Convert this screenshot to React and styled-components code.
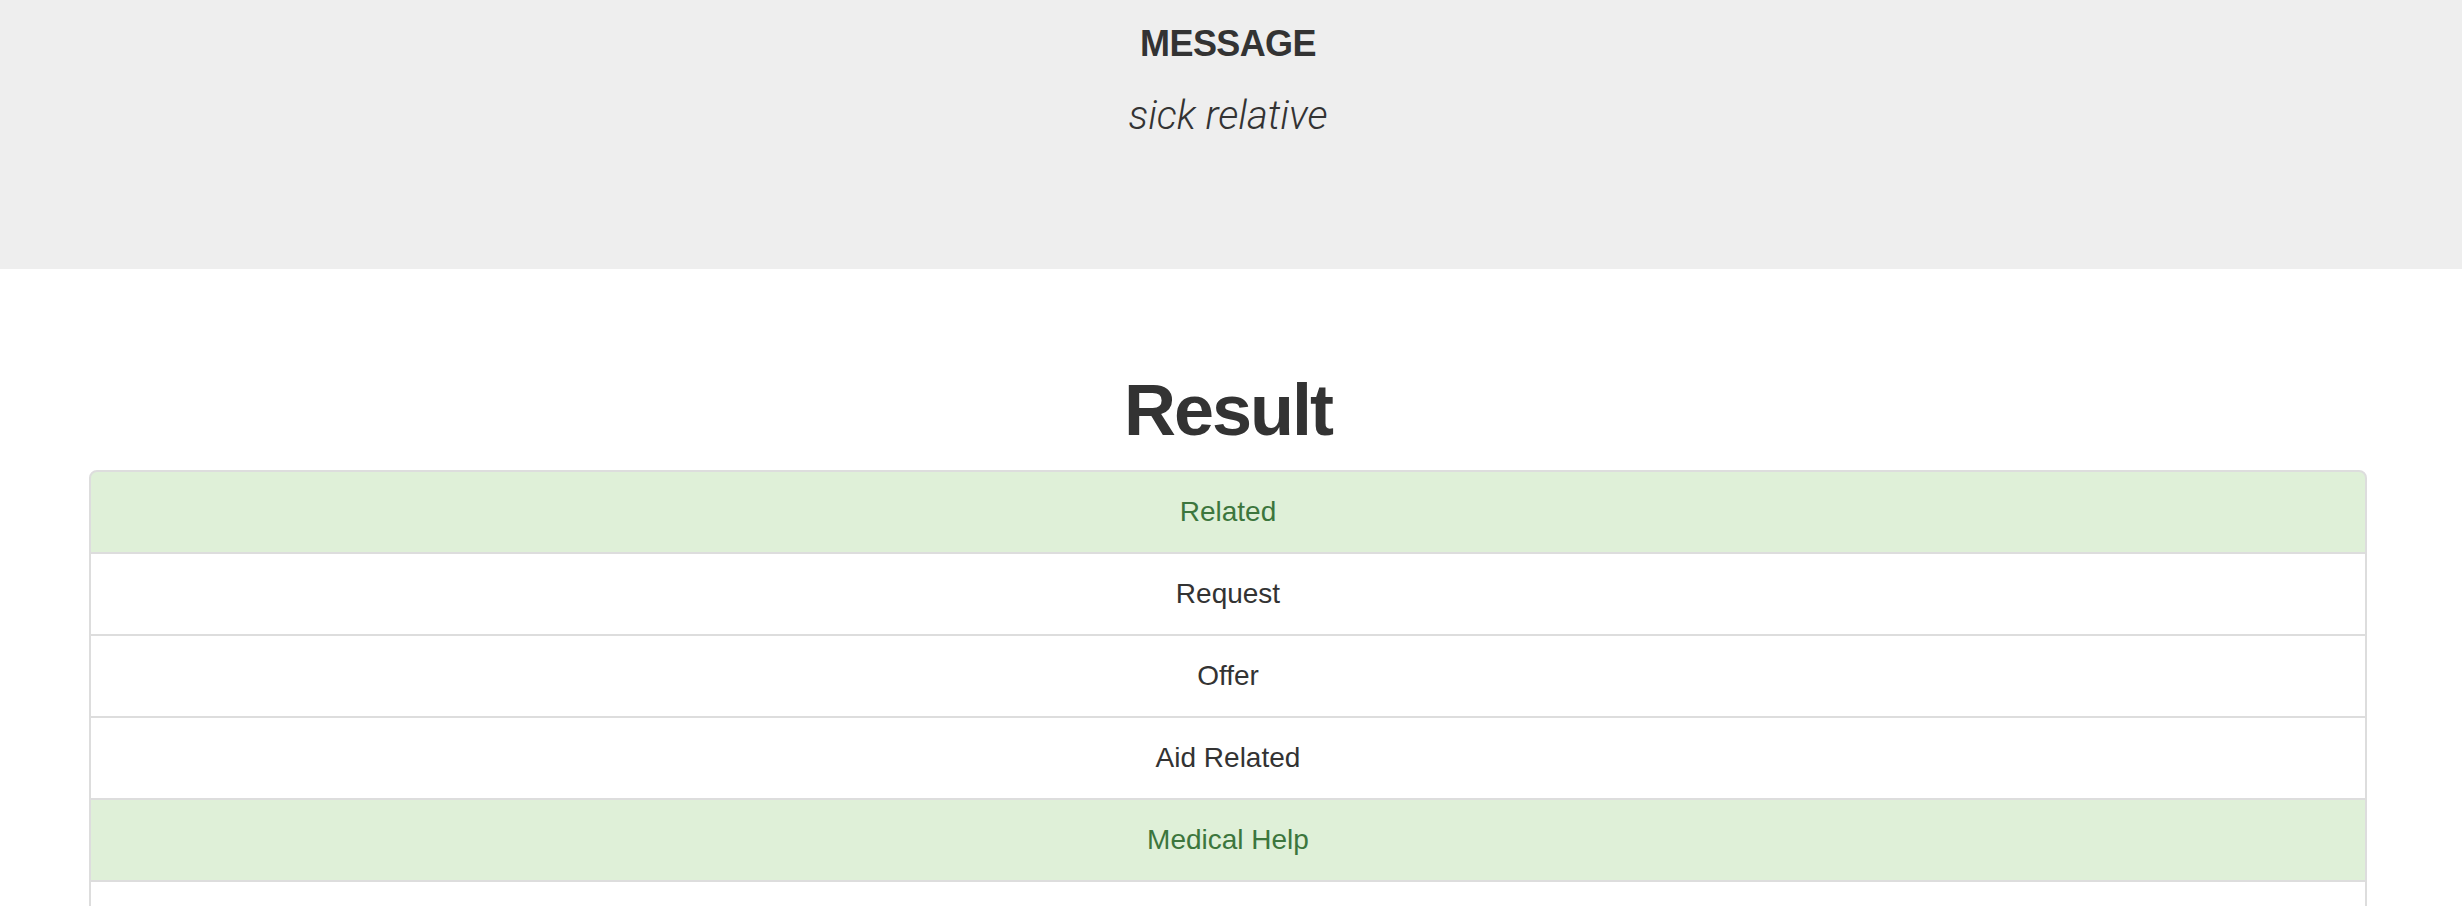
import React from "react";
import styled, { createGlobalStyle } from "styled-components";

const GlobalStyle = createGlobalStyle`
  html, body {
    margin: 0;
    padding: 0;
    background: #fff;
  }
  body {
    font-family: "Liberation Sans", Arial, sans-serif;
    color: #333;
  }
`;

const Jumbotron = styled.div`
  background: #eee;
  height: 269px;
  padding-top: 24px;
  box-sizing: border-box;
`;

const Container = styled.div`
  width: 2278px;
  margin-left: calc(50% - 1142px);
  text-align: center;
`;

const MessageLabel = styled.h4`
  margin: 0 0 22px;
  font-size: 36px;
  line-height: 1.1;
  font-weight: 700;
  letter-spacing: -0.6px;
`;

const Lead = styled.p`
  margin: 0;
  font-family: Roboto, "Liberation Sans", sans-serif;
  font-size: 40px;
  line-height: 60px;
  font-style: italic;
  font-weight: 300;
`;

const Title = styled.h1`
  margin: 102px 0 20px;
  font-size: 72px;
  line-height: 1.1;
  font-weight: 700;
  letter-spacing: -2px;
`;

const ListGroup = styled.ul`
  list-style: none;
  margin: 0;
  padding: 0;
`;

const Item = styled.li`
  padding: 20px 30px;
  margin-bottom: -2px;
  border: 2px solid #ddd;
  font-size: 28px;
  line-height: 40px;
  background: ${(p) => (p.$active ? "#dff0d8" : "#fff")};
  color: ${(p) => (p.$active ? "#3c763d" : "#333")};

  &:first-child {
    border-top-left-radius: 8px;
    border-top-right-radius: 8px;
  }
  &:last-child {
    margin-bottom: 0;
    border-bottom-left-radius: 8px;
    border-bottom-right-radius: 8px;
  }
`;

const categories = [
  { name: "Related", hit: true },
  { name: "Request", hit: false },
  { name: "Offer", hit: false },
  { name: "Aid Related", hit: false },
  { name: "Medical Help", hit: true },
  { name: "Medical Products", hit: false },
  { name: "Search And Rescue", hit: false },
  { name: "Security", hit: false },
];

export default function App() {
  return (
    <>
      <GlobalStyle />
      <Jumbotron>
        <Container>
          <MessageLabel>MESSAGE</MessageLabel>
          <Lead>sick relative</Lead>
        </Container>
      </Jumbotron>
      <Container>
        <Title>Result</Title>
        <ListGroup>
          {categories.map((c) => (
            <Item key={c.name} $active={c.hit}>
              {c.name}
            </Item>
          ))}
        </ListGroup>
      </Container>
    </>
  );
}
